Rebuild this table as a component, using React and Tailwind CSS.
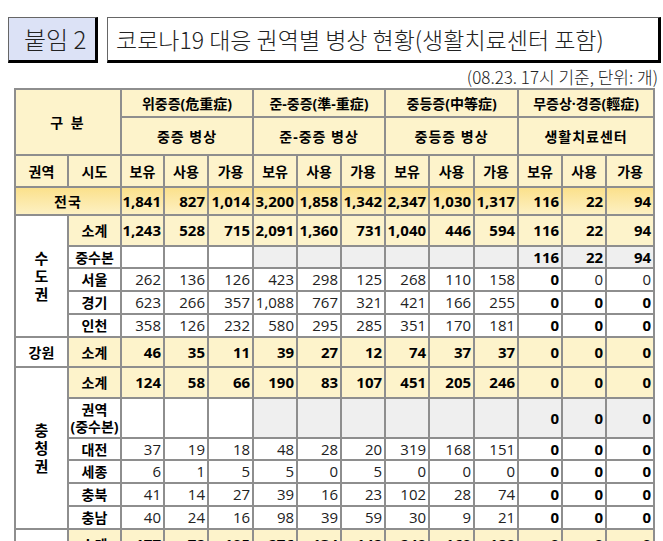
import React from "react";

const line = "border-2 border-[#8e8e8e]";
const yellow = "bg-[#fdf3cb]";
const gray = "bg-[#efefef]";

// 권역별 행 데이터
const sudo = [
  { sido: "소계", sub: true, vals: ["1,243", "528", "715", "2,091", "1,360", "731", "1,040", "446", "594", "116", "22", "94"], h: "h-[31px]" },
  { sido: "중수본", hq: true, vals: ["", "", "", "", "", "", "", "", "", "116", "22", "94"], h: "h-[22px]" },
  { sido: "서울", vals: ["262", "136", "126", "423", "298", "125", "268", "110", "158", "0", "0", "0"], thin: [10, 11], h: "h-[23px]" },
  { sido: "경기", vals: ["623", "266", "357", "1,088", "767", "321", "421", "166", "255", "0", "0", "0"], h: "h-[23px]" },
  { sido: "인천", vals: ["358", "126", "232", "580", "295", "285", "351", "170", "181", "0", "0", "0"], h: "h-[23px]" },
];

const chung = [
  { sido: "소계", sub: true, vals: ["124", "58", "66", "190", "83", "107", "451", "205", "246", "0", "0", "0"], h: "h-[31px]" },
  { sido: "권역\n(중수본)", hq: true, vals: ["", "", "", "", "", "", "", "", "", "0", "0", "0"], h: "h-[40px]" },
  { sido: "대전", vals: ["37", "19", "18", "48", "28", "20", "319", "168", "151", "0", "0", "0"], h: "h-[22px]" },
  { sido: "세종", vals: ["6", "1", "5", "5", "0", "5", "0", "0", "0", "0", "0", "0"], h: "h-[23px]" },
  { sido: "충북", vals: ["41", "14", "27", "39", "16", "23", "102", "28", "74", "0", "0", "0"], h: "h-[23px]" },
  { sido: "충남", vals: ["40", "24", "16", "98", "39", "59", "30", "9", "21", "0", "0", "0"], h: "h-[23px]" },
];

const honam = [
  { sido: "소계", sub: true, vals: ["177", "72", "105", "276", "134", "142", "240", "160", "180", "0", "0", "0"], h: "h-[31px]" },
  { sido: "권역\n(중수본)", hq: true, vals: ["", "", "", "", "", "", "", "", "", "0", "0", "0"], h: "h-[40px]" },
  { sido: "광주", vals: ["49", "20", "29", "74", "35", "39", "70", "44", "26", "0", "0", "0"], h: "h-[23px]" },
  { sido: "전북", vals: ["52", "22", "30", "96", "45", "51", "84", "56", "28", "0", "0", "0"], h: "h-[23px]" },
  { sido: "전남", vals: ["76", "30", "46", "106", "54", "52", "86", "60", "26", "0", "0", "0"], h: "h-[23px]" },
];

function Num({ v, bold, bg }) {
  return (
    <td className={`${line} ${bg} text-right pr-[2px] text-[15px] leading-none ${bold ? "font-bold text-black" : "font-normal text-[#222]"}`}>
      {v}
    </td>
  );
}

function DataRow({ row, region }) {
  const { sido, sub, hq, vals, thin = [], h } = row;
  return (
    <tr className={h}>
      {region}
      <td className={`${line} ${sub ? yellow : "bg-white"} text-center font-bold text-[14px] leading-[17px] whitespace-pre-line`}>
        {sido}
      </td>
      {vals.map((v, i) => {
        let bg = sub ? yellow : "bg-white";
        if (hq && i >= 3) bg = gray;
        const bold = sub || hq || (i >= 9 && !thin.includes(i));
        return <Num key={i} v={v} bold={bold} bg={bg} />;
      })}
    </tr>
  );
}

// 세로쓰기 권역명
function Region({ name, span }) {
  return (
    <td rowSpan={span} className={`${line} bg-white text-center font-bold text-[15px] leading-[18px]`}>
      {name.split("").map((c, i) => (
        <div key={i}>{c}</div>
      ))}
    </td>
  );
}

const widths = ["w-[53px]", "w-[53px]", "w-[43px]", "w-[44px]", "w-[45px]", "w-[44px]", "w-[44px]", "w-[44px]", "w-[44px]", "w-[45px]", "w-[44px]", "w-[44px]", "w-[44px]", "w-[48px]"];

export default function App() {
  const head = `${line} ${yellow} text-center font-bold text-[14px]`;
  const total = ["1,841", "827", "1,014", "3,200", "1,858", "1,342", "2,347", "1,030", "1,317", "116", "22", "94"];
  return (
    <div className="w-[663px] h-[541px] overflow-hidden bg-white pt-[17px] text-black" style={{ fontFamily: '"Open Sans", "Noto Sans CJK KR", sans-serif' }}>
      <div className="flex gap-[9px] pl-[8px]">
        <div
          className="w-[90px] h-[46px] bg-[#dce2f6] border-t border-l border-[#666] border-r-[3px] border-b-[3px] border-r-black border-b-black flex items-center pl-[15px] text-[24px] font-light text-[#222]"
          style={{ fontFamily: '"Noto Sans CJK KR", sans-serif' }}
        >
          붙임 2
        </div>
        <div
          className="w-[554px] h-[46px] bg-white border-t border-l border-[#666] border-r-[3px] border-b-[3px] border-r-black border-b-black flex items-center pl-[8px] text-[23px] font-light text-[#222]"
          style={{ fontFamily: '"Noto Sans CJK KR", sans-serif' }}
        >
          코로나19 대응 권역별 병상 현황(생활치료센터 포함)
        </div>
      </div>
      <div
        className="text-right pr-[5px] mt-[3px] h-[22px] text-[17px] font-light leading-[22px] text-[#222]"
        style={{ fontFamily: '"Noto Sans CJK KR", sans-serif' }}
      >
        (08.23. 17시 기준, 단위: 개)
      </div>
      <div className="pl-[14px]">
        <table className="border-collapse table-fixed w-[641px]">
          <colgroup>
            {widths.map((w, i) => (
              <col key={i} className={w} />
            ))}
          </colgroup>
          <tbody>
            <tr className="h-[28px]">
              <td colSpan={2} rowSpan={2} className={`${head} tracking-[2px]`}>
                구 분
              </td>
              <td colSpan={3} className={head}>위중증(危重症)</td>
              <td colSpan={3} className={head}>준-중증(準-重症)</td>
              <td colSpan={3} className={head}>중등증(中等症)</td>
              <td colSpan={3} className={head}>무증상·경증(輕症)</td>
            </tr>
            <tr className="h-[38px]">
              <td colSpan={3} className={`${head} tracking-[1px]`}>중증 병상</td>
              <td colSpan={3} className={`${head} tracking-[1px]`}>준-중증 병상</td>
              <td colSpan={3} className={`${head} tracking-[1px]`}>중등증 병상</td>
              <td colSpan={3} className={`${head} tracking-[1px]`}>생활치료센터</td>
            </tr>
            <tr className="h-[32px]">
              <td className={head}>권역</td>
              <td className={head}>시도</td>
              {Array.from({ length: 4 }).flatMap((_, g) =>
                ["보유", "사용", "가용"].map((t) => (
                  <td key={g + t} className={head}>
                    {t}
                  </td>
                ))
              )}
            </tr>
            <tr className="h-[28px] bg-gradient-to-b from-[#fbe089] to-[#fdf1c4]">
              <td colSpan={2} className={`${line} text-center font-bold text-[14px] tracking-[1px]`}>
                전국
              </td>
              {total.map((v, i) => (
                <Num key={i} v={v} bold bg="" />
              ))}
            </tr>
            {sudo.map((r, i) => (
              <DataRow key={"s" + i} row={r} region={i === 0 ? <Region name="수도권" span={sudo.length} /> : null} />
            ))}
            <tr className="h-[30px]">
              <td className={`${line} bg-white text-center font-bold text-[14px]`}>강원</td>
              <td className={`${line} ${yellow} text-center font-bold text-[14px]`}>소계</td>
              {["46", "35", "11", "39", "27", "12", "74", "37", "37", "0", "0", "0"].map((v, i) => (
                <Num key={i} v={v} bold bg={yellow} />
              ))}
            </tr>
            {chung.map((r, i) => (
              <DataRow key={"c" + i} row={r} region={i === 0 ? <Region name="충청권" span={chung.length} /> : null} />
            ))}
            {honam.map((r, i) => (
              <DataRow key={"h" + i} row={r} region={i === 0 ? <Region name="호남권" span={honam.length} /> : null} />
            ))}
          </tbody>
        </table>
      </div>
    </div>
  );
}
